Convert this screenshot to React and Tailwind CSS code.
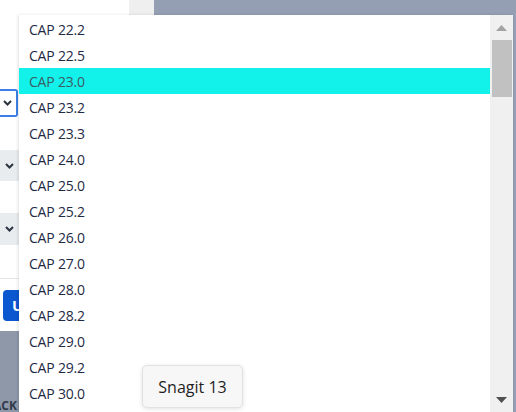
import React from "react";

const versions = [
  "CAP 22.2",
  "CAP 22.5",
  "CAP 23.0",
  "CAP 23.2",
  "CAP 23.3",
  "CAP 24.0",
  "CAP 25.0",
  "CAP 25.2",
  "CAP 26.0",
  "CAP 27.0",
  "CAP 28.0",
  "CAP 28.2",
  "CAP 29.0",
  "CAP 29.2",
  "CAP 30.0",
  "CAP 31.0",
];

const Chevron = () => (
  <svg width="9" height="6" viewBox="0 0 9 6" className="text-[#2b3440]">
    <path d="M1 1l3.5 3.5L8 1" fill="none" stroke="currentColor" strokeWidth="2" />
  </svg>
);

const App = () => {
  return (
    <div className="relative w-[516px] h-[412px] overflow-hidden flex bg-[#949fb3] font-['Open_Sans',sans-serif]">
      {/* left form panel, mostly hidden behind the open list */}
      <div className="w-[129px] flex flex-col shrink-0">
        <div className="bg-white h-[331px] flex flex-col">
          <div className="h-[89px]" />
          <div className="h-[28px] w-[18px] border-2 border-l-0 border-[#3d7fe6] rounded-r-[3px] flex items-center justify-end pr-[4px]">
            <Chevron />
          </div>
          <div className="h-[33px]" />
          <div className="h-[31px] w-[19px] bg-[#e9ecef] flex items-center justify-end pr-[5px]">
            <Chevron />
          </div>
          <div className="h-[32px]" />
          <div className="h-[32px] w-[19px] bg-[#e9ecef] flex items-center justify-end pr-[5px]">
            <Chevron />
          </div>
          <div className="h-[33px]" />
          <div className="h-px bg-[#e3e5e8]" />
          <div className="h-[11px]" />
          <div className="ml-[3px] h-[31px] w-[16px] overflow-hidden rounded-l-[4px] bg-[#0b57d0] text-white text-[15px] font-bold flex items-center pl-[9px]">
            U
          </div>
        </div>
        <div className="flex-1 bg-[#8f98a9] flex items-end overflow-hidden">
          <span className="text-[12px] font-bold text-[#2f3a4a] -ml-[7px] leading-[13px] whitespace-nowrap">ACK</span>
        </div>
      </div>
      <div className="w-[25px] bg-[#efefef] shrink-0" />
      <div className="flex-1" />

      {/* open select list */}
      <div className="absolute left-[19px] top-[15px] w-[494px] h-[400px] bg-white flex shadow-[-1px_0_3px_rgba(0,0,0,0.12)]">
        <ul className="flex-1 pt-[1px]">
          {versions.map((v) => (
            <li
              key={v}
              className={
                v === "CAP 23.0"
                  ? "h-[26px] pl-[10px] flex items-center text-[14px] tracking-[-0.2px] bg-[#13f2ea] text-[#3b5c63]"
                  : "h-[26px] pl-[10px] flex items-center text-[14px] tracking-[-0.2px] text-[#1e2a44]"
              }
            >
              {v}
            </li>
          ))}
        </ul>
        <div className="w-[23px] bg-[#f0f0f0] flex flex-col items-center">
          <svg width="11" height="6" viewBox="0 0 11 6" className="mt-[10px]">
            <path d="M5.5 0L11 6H0z" fill="#a3a3a3" />
          </svg>
          <div className="mt-[9px] w-[20px] h-[57px] bg-[#c1c1c1]" />
          <div className="flex-1" />
          <svg width="11" height="6" viewBox="0 0 11 6" className="mb-[12px]">
            <path d="M0 0h11L5.5 6z" fill="#505050" />
          </svg>
        </div>
      </div>

      {/* tooltip */}
      <div className="absolute left-[142px] top-[365px] w-[101px] h-[43px] rounded-[5px] bg-[#f7f7f7] border border-[#e2e2e2] shadow-[0_1px_4px_rgba(0,0,0,0.12)] flex items-center justify-center text-[16px] text-[#1f1f1f]">
        Snagit 13
      </div>
    </div>
  );
};

export default App;
